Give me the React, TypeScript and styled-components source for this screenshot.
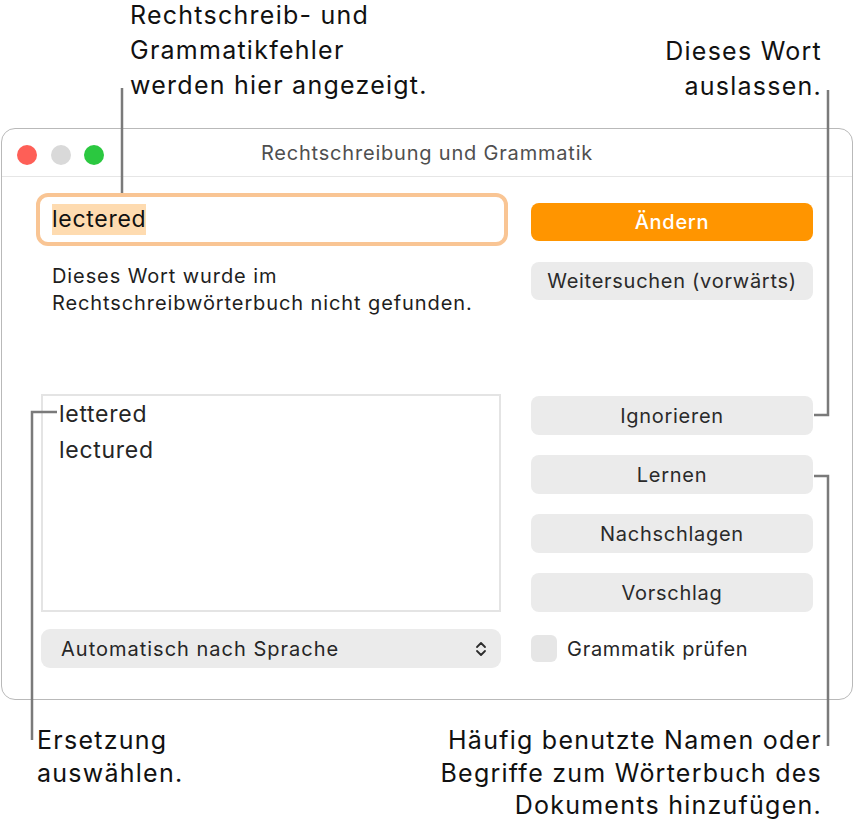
import styled, { createGlobalStyle } from "styled-components";

const GlobalStyle = createGlobalStyle`
  html, body {
    margin: 0;
    padding: 0;
    background: #ffffff;
  }
  body {
    font-family: Inter, "Noto Sans", "Liberation Sans", sans-serif;
    letter-spacing: 0.045em;
    color: #1d1d1f;
    -webkit-font-smoothing: antialiased;
  }
`;

const suggestions = ["lettered", "lectured"];
const actions = ["Ignorieren", "Lernen", "Nachschlagen", "Vorschlag"];

// leader lines from the captions to the controls they describe
const leaders = [
  "M122 88 L122 193",
  "M828 90 L828 415 L814 415",
  "M814 476 L828 476 L828 746",
  "M57 412 L32 412 L32 740",
];

export default function App() {
  return (
    <Page>
      <GlobalStyle />
      <Header>
        <Caption $indent={130}>
          Rechtschreib- und
          <br />
          Grammatikfehler
          <br />
          werden hier angezeigt.
        </Caption>
        <Caption $align="right" $top={36} $outdent={32}>
          Dieses Wort
          <br />
          auslassen.
        </Caption>
      </Header>

      <Window>
        <TitleBar>
          <Lights>
            <Light $color="#fe5f57" />
            <Light $color="#d9d9d9" />
            <Light $color="#2bc840" />
          </Lights>
          <Title>Rechtschreibung und Grammatik</Title>
        </TitleBar>

        <Body>
          <LeftColumn>
            <WordField>
              <Selected>lectered</Selected>
            </WordField>
            <Message>
              Dieses Wort wurde im
              <br />
              Rechtschreibwörterbuch nicht gefunden.
            </Message>
            <SuggestionList>
              {suggestions.map((s) => (
                <Suggestion key={s}>{s}</Suggestion>
              ))}
            </SuggestionList>
            <Popup>
              <span>Automatisch nach Sprache</span>
              <svg width="12" height="18" viewBox="0 0 12 18" fill="none">
                <path
                  d="M2 7 L6 3 L10 7 M2 11 L6 15 L10 11"
                  stroke="#2c2c2c"
                  strokeWidth="1.8"
                  strokeLinecap="round"
                  strokeLinejoin="round"
                />
              </svg>
            </Popup>
          </LeftColumn>

          <RightColumn>
            <Button $primary>Ändern</Button>
            <Button $gap={21}>Weitersuchen (vorwärts)</Button>
            {actions.map((a, i) => (
              <Button key={a} $gap={i === 0 ? 96 : 20} $tall>
                {a}
              </Button>
            ))}
            <CheckRow>
              <Checkbox />
              Grammatik prüfen
            </CheckRow>
          </RightColumn>
        </Body>
      </Window>

      <Footer>
        <Caption $lineHeight={32.5}>
          Ersetzung
          <br />
          auswählen.
        </Caption>
        <Caption $align="right" $lineHeight={32.5}>
          Häufig benutzte Namen oder
          <br />
          Begriffe zum Wörterbuch des
          <br />
          Dokuments hinzufügen.
        </Caption>
      </Footer>

      <Leaders width="854" height="828" viewBox="0 0 854 828">
        {leaders.map((d) => (
          <path key={d} d={d} fill="none" stroke="#7a7a7a" strokeWidth="2.5" />
        ))}
      </Leaders>
    </Page>
  );
}

const Page = styled.div`
  position: relative;
  width: 854px;
  height: 828px;
  overflow: hidden;
  display: flex;
  flex-direction: column;
`;

const Header = styled.div`
  height: 128px;
  display: flex;
  justify-content: space-between;
  align-items: flex-start;
`;

const Caption = styled.div<{
  $align?: "left" | "right";
  $indent?: number;
  $outdent?: number;
  $top?: number;
  $lineHeight?: number;
}>`
  font-size: 25px;
  letter-spacing: 0.05em;
  line-height: ${(p) => p.$lineHeight ?? 35}px;
  color: #111111;
  text-align: ${(p) => p.$align ?? "left"};
  margin-left: ${(p) => p.$indent ?? 0}px;
  margin-right: ${(p) => p.$outdent ?? 0}px;
  margin-top: ${(p) => (p.$top ?? 0) - 2}px;
  white-space: nowrap;
`;

const Window = styled.div`
  box-sizing: border-box;
  margin-left: 1px;
  width: 852px;
  height: 572px;
  border: 1px solid #b9b9b9;
  border-radius: 14px;
  background: #ffffff;
  display: flex;
  flex-direction: column;
`;

const TitleBar = styled.div`
  box-sizing: border-box;
  height: 48px;
  border-bottom: 1px solid #e6e6e6;
  display: grid;
  grid-template-columns: 1fr auto 1fr;
  align-items: center;
  padding-top: 4px;
`;

const Lights = styled.div`
  display: flex;
  gap: 13.5px;
  padding-left: 15px;
`;

const Light = styled.span<{ $color: string }>`
  width: 20px;
  height: 20px;
  border-radius: 50%;
  background: ${(p) => p.$color};
`;

const Title = styled.div`
  font-size: 20px;
  letter-spacing: 0.04em;
  color: #4f4f4f;
  margin-top: -4px;
`;

const Body = styled.div`
  display: grid;
  grid-template-columns: 472px 282px;
  column-gap: 23px;
  padding: 16px 39px 0 34px;
`;

const LeftColumn = styled.div`
  display: flex;
  flex-direction: column;
`;

const WordField = styled.div`
  box-sizing: border-box;
  height: 53px;
  border: 4px solid #f9c594;
  border-radius: 12px;
  padding: 0 12px;
  display: flex;
  align-items: center;
  font-size: 23px;
  color: #111111;
`;

const Selected = styled.span`
  background: #fedbb0;
  line-height: 31px;
`;

const Message = styled.div`
  margin-top: 17px;
  padding-left: 16px;
  font-size: 20px;
  letter-spacing: 0.045em;
  line-height: 27px;
  color: #1e1e1e;
`;

const SuggestionList = styled.div`
  box-sizing: border-box;
  margin: 77px 0 0 5px;
  width: 460px;
  height: 218px;
  border: 2px solid #e4e4e4;
  padding: 0 0 0 16px;
`;

const Suggestion = styled.div`
  font-size: 23px;
  line-height: 36px;
  color: #262626;
`;

const Popup = styled.div`
  box-sizing: border-box;
  margin: 17px 0 0 5px;
  width: 460px;
  height: 39px;
  border-radius: 9px;
  background: #ebebeb;
  display: flex;
  align-items: center;
  justify-content: space-between;
  padding: 0 14px 0 20px;
  font-size: 20px;
  letter-spacing: 0.05em;
  color: #262626;
`;

const RightColumn = styled.div`
  display: flex;
  flex-direction: column;
  padding-top: 10px;
`;

const Button = styled.div<{ $primary?: boolean; $gap?: number; $tall?: boolean }>`
  height: ${(p) => (p.$tall ? 39 : 38)}px;
  margin-top: ${(p) => p.$gap ?? 0}px;
  border-radius: 8px;
  display: flex;
  align-items: center;
  justify-content: center;
  font-size: 20px;
  font-weight: ${(p) => (p.$primary ? 500 : 400)};
  background: ${(p) => (p.$primary ? "#ff9500" : "#ebebeb")};
  color: ${(p) => (p.$primary ? "#ffffff" : "#2a2a2a")};
`;

const CheckRow = styled.div`
  margin-top: 17px;
  height: 39px;
  display: flex;
  align-items: center;
  gap: 10px;
  font-size: 20px;
  color: #262626;
`;

const Checkbox = styled.span`
  width: 26px;
  height: 27px;
  border-radius: 6px;
  background: #e6e6e6;
`;

const Footer = styled.div`
  display: flex;
  justify-content: space-between;
  padding: 26px 32px 0 37px;
`;

const Leaders = styled.svg`
  position: absolute;
  top: 0;
  left: 0;
  pointer-events: none;
`;
